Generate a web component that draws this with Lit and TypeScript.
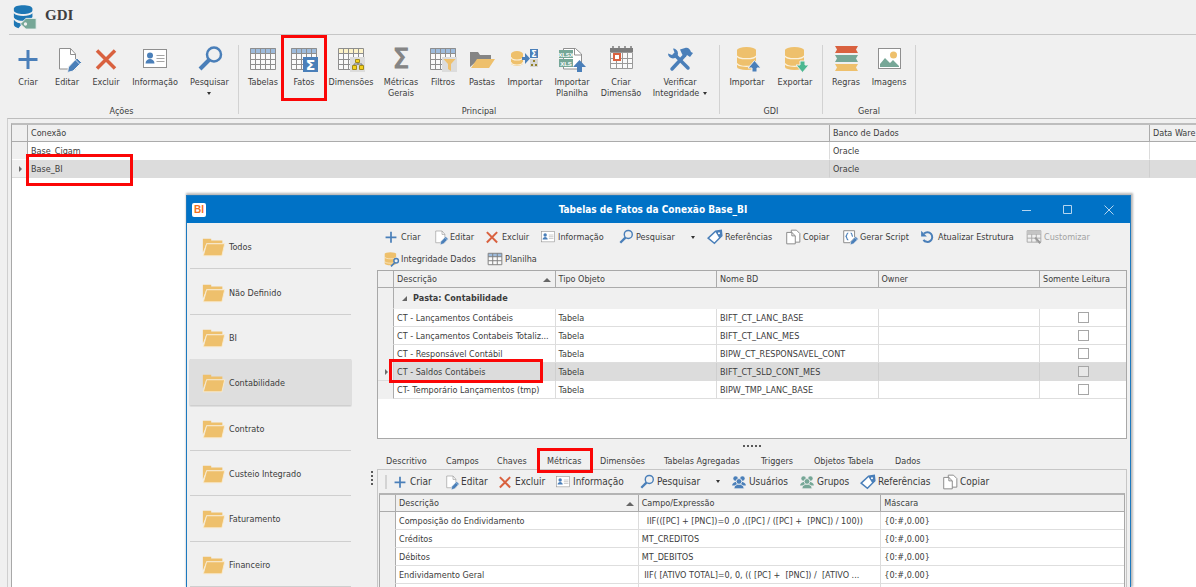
import { LitElement, html, svg, css, nothing } from "lit";
import { customElement, property } from "lit/decorators.js";
import { classMap } from "lit/directives/class-map.js";

const BLUE = "#4a7fb9";
const RED = "#d9613f";
const GREEN = "#76a797";
const GOLD = "#eec06c";

const plus = svg`<path d="M14 5v19M4.500 14.500h19" stroke=${BLUE} stroke-width="3" fill="none"/>`;
const pageShape = svg`<path d="M6.500 3.500h11l5 5.500v15h-16z" fill="#fff" stroke="#8f8f8f"/><path d="M17.500 3.500v6h5" fill="none" stroke="#8f8f8f"/>`;
const pencil = svg`<path d="M24 13l4.500 4.500-8.500 8.500-5.500 1.500 1-5.500z" fill=${BLUE} stroke="#f0f0f0"/><path d="M22 14.500l5 5" stroke="#c9dbee"/>`;
const tableShape = (head: string) => svg`
  <rect x="1.500" y="3.500" width="25" height="21" fill="#fafafa"/>
  <rect x="1" y="3" width="26" height="6" fill=${head}/>
  <path d="M1.500 3.500h25v21h-25zM1.500 8.500h25M1.500 14.500h25M1.500 19.500h25M6.500 3.500v21M11.500 3.500v21M16.500 3.500v21M21.500 3.500v21" fill="none" stroke="#8e8e8e"/>`;
const cylinder = (x: number, y: number, w: number, h: number) => svg`
  <path d="M${x} ${y + 3}a${w / 2} 3 0 0 1 ${w} 0v${h - 6}a${w / 2} 3 0 0 1 ${-w} 0z" fill=${GOLD}/>
  <path d="M${x} ${y + h / 3 + 1}a${w / 2} 3 0 0 0 ${w} 0M${x} ${y + (2 * h) / 3 + 1}a${w / 2} 3 0 0 0 ${w} 0" fill="none" stroke="#fbf1dc" stroke-width="1.200"/>`;
const people = (c: string) => svg`
  <g fill=${c}><circle cx="8" cy="8" r="4"/><circle cx="20" cy="8" r="4"/>
  <path d="M2 20c0-9 24-9 24 0z"/></g>
  <g fill=${c} stroke="#f0f0f0" stroke-width="1.500"><path d="M5 26c0-11 18-11 18 0z"/><circle cx="14" cy="13" r="5"/></g>`;

const ICONS: Record<string, unknown> = {
  plus,
  edit: svg`${pageShape}${pencil}`,
  remove: svg`<path d="M5 5.500l18 18M23 5.500l-18 18" stroke=${RED} stroke-width="3.500" fill="none"/>`,
  info: svg`<rect x="2.500" y="4.500" width="23" height="18" fill="#fff" stroke="#8f8f8f"/>
    <circle cx="9" cy="10.500" r="3" fill=${BLUE}/><path d="M4.500 18.500c0-6 9-6 9 0z" fill=${BLUE}/>
    <path d="M15.500 10.500h8M15.500 13.500h8M15.500 16.500h8" stroke="#a5a5a5"/>`,
  search: svg`<path d="M13 15l-9 9" stroke=${BLUE} stroke-width="4"/><circle cx="18" cy="9.500" r="7" fill="none" stroke=${BLUE} stroke-width="2.500"/>`,
  table: tableShape("#9dbbdc"),
  facts: svg`${tableShape("#9dbbdc")}<rect x="13" y="12" width="15" height="15" fill=${BLUE}/>
    <text x="20.500" y="24.500" font-size="14" font-weight="700" text-anchor="middle" fill="#fff">Σ</text>`,
  dims: svg`${tableShape("#fdf3c8")}<rect x="13" y="12" width="15" height="15" fill="#dcdcdc"/>
    <path d="M17 21v-2h8v2M21 18v2" stroke="#777" fill="none"/>
    <g fill="#f4d01c" stroke="#a08a1a"><path d="M18.500 14.500h4v3h-4zM15.500 20.500h4v4h-4zM22.500 20.500h4v4h-4z"/></g>`,
  sigma: svg`<text x="14" y="22.500" font-size="26" font-weight="400" text-anchor="middle" fill="#858585" stroke="#858585" stroke-width="1.200">Σ</text>`,
  filter: svg`${tableShape("#9dbbdc")}<rect x="13" y="12" width="15" height="15" fill="#dcdcdc"/>
    <path d="M14.500 14h12l-4.500 5v7l-3-2v-5z" fill=${GOLD}/>`,
  folders: svg`<path d="M2 22v-15h8l2 3h11v5h-13z" fill="#858585"/><path d="M9 14h18l-6 9h-18z" fill=${GOLD}/>`,
  importer: svg`${cylinder(0, 6, 12, 15)}
    <path d="M11 12h3v-4l5 5.500-5 5.500v-4h-3z" fill=${BLUE}/>
    <rect x="19" y="4" width="8" height="9" fill=${BLUE}/><text x="23" y="11.500" font-size="8" font-weight="700" text-anchor="middle" fill="#fff">Σ</text>
    <rect x="19" y="14" width="8" height="8" fill="#d6d6d6"/><path d="M22 15h2v2h-2zM20 19h2v2h-2zM24 19h2v2h-2z" fill="#93822b"/>`,
  sheet: svg`<path d="M5.500 3.500h12l6 5.500v15h-18z" fill="#fff" stroke="#8f8f8f"/><path d="M16.500 3.500v6.500h7" fill="none" stroke="#8f8f8f"/>
    <rect x="1" y="5" width="14" height="8" fill=${GREEN}/><rect x="1" y="14" width="14" height="8" fill=${GREEN}/>
    <text x="8" y="11.500" font-size="6" font-weight="700" font-family="Liberation Sans" text-anchor="middle" fill="#fff">XLSX</text>
    <text x="8" y="20.500" font-size="6" font-weight="700" font-family="Liberation Sans" text-anchor="middle" fill="#fff">XLS</text>
    <path d="M15 22l6.500-7 6.500 7h-4v5h-5v-5z" fill=${BLUE}/>`,
  calendar: svg`<rect x="3" y="3" width="23" height="21" fill="#fafafa"/><rect x="3" y="3" width="23" height="4" fill="#7c7c7c"/>
    <path d="M6 1v4M12 1v4M18 1v4M24 1v4" stroke="#7c7c7c" stroke-width="1.500"/>
    <path d="M3.500 7.500h22v16h-22zM3.500 13.500h22M3.500 18.500h22M9.500 7.500v16M15.500 7.500v16M20.500 7.500v16" fill="none" stroke="#9a9a9a"/>
    <rect x="7" y="9" width="6" height="6" fill="#fff" stroke=${RED} stroke-width="2"/>`,
  tools: svg`<path d="M6 24l13-14" stroke=${BLUE} stroke-width="3.500" stroke-linecap="round"/>
    <path d="M14 4.500l5-1.500c3-1 5 1 6 4l2 1-3 4-3-2-3 2-2-3z" fill=${BLUE}/>
    <path d="M9 10l13 13" stroke=${BLUE} stroke-width="3.500" stroke-linecap="round"/>
    <path d="M7 3.500a5 5 0 1 1-5 5l4 1.500 2.500-2.500z" fill=${BLUE}/>`,
  dbUp: svg`${cylinder(4, 2, 19, 23)}<path d="M15 23l6.500-7.500 6.500 7.500h-4v4h-5v-4z" fill=${BLUE} stroke="#f0f0f0"/>`,
  dbDown: svg`${cylinder(4, 2, 19, 23)}<path d="M15 20l6.500 7.500 6.500-7.500h-4v-4h-5v4z" fill="#4bb891" stroke="#f0f0f0"/>`,
  rules: svg`<path d="M3 1h23l-2 3.500 2 3.500h-23l2-3.500z" fill=${RED}/><path d="M3 10h23l-2 3.500 2 3.500h-23l2-3.500z" fill=${GREEN}/><path d="M3 19h23l-2 3.500 2 3.500h-23l2-3.500z" fill=${GOLD}/>`,
  image: svg`<rect x="3.500" y="3.500" width="22" height="20" fill="#fff" stroke="#8f8f8f"/><circle cx="18.500" cy="10" r="3.500" fill=${GOLD}/>
    <path d="M5 22v-3l5-6 5 5 3-3 6 6v1z" fill=${GREEN}/>`,
  folder: svg`<path d="M2 5h9v2h12v3h-17l-4 10z" fill=${GOLD}/><path d="M6 10.500h19.500l-3 13h-20z" fill=${GOLD} stroke="#f9ecd0"/>`,
  tag: svg`<path d="M2 16l13-12 10-1.500 1 9.500-13 13z" fill="#fff" stroke=${BLUE} stroke-width="2.500"/><path d="M14 4l11-1.500 1 10-4 4z" fill=${BLUE}/><circle cx="21" cy="7.500" r="1.800" fill="#fff"/>`,
  copy: svg`<path d="M11 2h9l6 6v15h-15z" fill="#fff" stroke="#8a8a8a" stroke-width="1.700"/><path d="M3 6h9l6 6v14h-15z" fill="#fff" stroke="#8a8a8a" stroke-width="1.700"/><path d="M12 6v6h6" fill="none" stroke="#8a8a8a" stroke-width="1.700"/>`,
  script: svg`<path d="M3 3h19v12l-8 9h-11z" fill="#fff" stroke="#8a8a8a" stroke-width="1.700"/><path d="M11 7c-4 0-1 6-5 6 4 0 1 6 5 6M15 7c4 0 1 5 4 6" fill="none" stroke=${BLUE} stroke-width="2"/>${pencil}`,
  undo: svg`<path d="M7 8a8.500 8.500 0 1 1-1 11" fill="none" stroke=${BLUE} stroke-width="3.500"/><path d="M2 3v10h10z" fill=${BLUE}/>`,
  custom: svg`<path d="M2 3h24v20h-24zM2 9h24M2 16h24M10 3v20M18 3v20" fill="none" stroke="#aaa" stroke-width="1.700"/><path d="M2 3h24v6h-24z" fill="#c4c4c4"/><path d="M16 15l9 10" stroke="#999" stroke-width="3.500"/>`,
  dbSearch: svg`${cylinder(3, 2, 20, 23)}<path d="M20 21l-6 6" stroke=${BLUE} stroke-width="3"/><circle cx="23" cy="17" r="4" fill="#f0f0f0" stroke=${BLUE} stroke-width="2.500"/>`,
  sheetGrid: svg`<rect x="2" y="4" width="24" height="20" fill="#fafafa"/><rect x="2" y="4" width="24" height="6" fill="#9dbbdc"/><path d="M2 4h24v20h-24zM2 10h24M2 17h24M10 4v20M18 4v20" fill="none" stroke="#808080" stroke-width="1.700"/>`,
  users: people(BLUE),
  groups: people(GREEN),
  logo: svg`<g fill="#1e77b4"><path d="M2 5c0-5 20-5 20 0v2c0 5-20 5-20 0z"/><path d="M2 10c3 4 17 4 20 0v4c-1 2-6 4-11 4s-9-2-9-4z"/><path d="M2 17c2 3 6 4 9 4l-4 5c-3-1-5-2-5-4z"/></g>
    <path d="M9 21.500l6-6h11v11.500h-11z" fill=${GREEN} stroke="#e8f0ee"/><circle cx="14.500" cy="21.500" r="1.800" fill="#f0f0f0"/>`,
};

type Command = {
  icon: string;
  label: string;
  second?: string;
  arrow?: boolean;
  marked?: boolean;
  disabled?: boolean;
};

@customElement("gdi-icon")
export class GdiIcon extends LitElement {
  @property() name = "plus";

  static styles = css`
    :host { display: block; width: 28px; height: 28px; flex: none; }
    svg { display: block; width: 100%; height: 100%; overflow: visible; font-family: "DejaVu Sans", sans-serif; }
  `;

  render() {
    return html`<svg viewBox="0 0 28 28" aria-hidden="true">${ICONS[this.name] ?? nothing}</svg>`;
  }
}

@customElement("gdi-ribbon-group")
export class GdiRibbonGroup extends LitElement {
  @property() caption = "";
  @property({ attribute: false }) items: Command[] = [];

  static styles = css`
    :host { display: flex; flex-direction: column; justify-content: space-between; padding: 0 4px; border-right: 1px solid #d2d2d2; }
    :host(.gdi), :host(.general) { padding: 0 3px; }
    .items { display: grid; }
    :host(.actions) .items { grid-template-columns: 38px 40px 38px 60px 49px; }
    :host(.main) .items { grid-template-columns: 40px 42px 52px 48px 36px 42px 44px 50px 48px 70px; }
    :host(.gdi) .items { grid-template-columns: 48px 48px; }
    :host(.general) .items { grid-template-columns: 40px 46px; }
    button { position: relative; display: flex; flex-direction: column; align-items: center; gap: 4px; border: 0; padding: 0; background: none; font: inherit; color: inherit; line-height: 11px; white-space: nowrap; }
    .line { display: block; }
    .line.tail { display: flex; justify-content: center; align-items: center; gap: 4px; min-height: 11px; }
    .arrow { border: 2px solid transparent; border-top: 3px solid #333; border-bottom: 0; }
    .mark { position: absolute; inset: -10px -2px -2px; border: 3px solid #fb0606; }
    .caption { margin-bottom: -3px; text-align: center; line-height: 12px; }
  `;

  render() {
    return html`
      <div class="items">
        ${this.items.map(
          (c) => html`<button type="button">
            <gdi-icon name=${c.icon}></gdi-icon>
            <span>
              <span class="line">${c.label}</span>
              <span class="line tail">${c.second ?? nothing}${c.arrow ? html`<span class="arrow"></span>` : nothing}</span>
            </span>
            ${c.marked ? html`<span class="mark"></span>` : nothing}
          </button>`
        )}
      </div>
      <div class="caption">${this.caption}</div>
    `;
  }
}

@customElement("gdi-toolbar")
export class GdiToolbar extends LitElement {
  @property({ attribute: false }) items: Command[] = [];

  static styles = css`
    :host { display: grid; align-items: center; height: 22px; }
    button { display: flex; align-items: center; gap: 2px; border: 0; padding: 0; background: none; font: inherit; color: inherit; white-space: nowrap; }
    button:disabled { color: #a3a3a3; }
    gdi-icon { width: 16px; height: 16px; }
    .arrow { margin-left: 14px; border: 2px solid transparent; border-top: 3px solid #333; border-bottom: 0; }
  `;

  render() {
    return this.items.map(
      (c) => html`<button type="button" ?disabled=${c.disabled}>
        <gdi-icon name=${c.icon}></gdi-icon><span>${c.label}</span>
        ${c.arrow ? html`<span class="arrow"></span>` : nothing}
      </button>`
    );
  }
}

const ACTIONS: Command[] = [
  { icon: "plus", label: "Criar" },
  { icon: "edit", label: "Editar" },
  { icon: "remove", label: "Excluir" },
  { icon: "info", label: "Informação" },
  { icon: "search", label: "Pesquisar", arrow: true },
];
const MAIN: Command[] = [
  { icon: "table", label: "Tabelas" },
  { icon: "facts", label: "Fatos", marked: true },
  { icon: "dims", label: "Dimensões" },
  { icon: "sigma", label: "Métricas", second: "Gerais" },
  { icon: "filter", label: "Filtros" },
  { icon: "folders", label: "Pastas" },
  { icon: "importer", label: "Importar" },
  { icon: "sheet", label: "Importar", second: "Planilha" },
  { icon: "calendar", label: "Criar", second: "Dimensão" },
  { icon: "tools", label: "Verificar", second: "Integridade", arrow: true },
];
const GDI: Command[] = [
  { icon: "dbUp", label: "Importar" },
  { icon: "dbDown", label: "Exportar" },
];
const GENERAL: Command[] = [
  { icon: "rules", label: "Regras" },
  { icon: "image", label: "Imagens" },
];
const FACT_TOOLS: Command[] = [
  ...ACTIONS,
  { icon: "tag", label: "Referências" },
  { icon: "copy", label: "Copiar" },
  { icon: "script", label: "Gerar Script" },
  { icon: "undo", label: "Atualizar Estrutura" },
  { icon: "custom", label: "Customizar", disabled: true },
];
const FACT_TOOLS_MORE: Command[] = [
  { icon: "dbSearch", label: "Integridade Dados" },
  { icon: "sheetGrid", label: "Planilha" },
];
const METRIC_TOOLS: Command[] = [
  ...ACTIONS,
  { icon: "users", label: "Usuários" },
  { icon: "groups", label: "Grupos" },
  { icon: "tag", label: "Referências" },
  { icon: "copy", label: "Copiar" },
];
const FOLDERS = ["Todos", "Não Definido", "BI", "Contabilidade", "Contrato", "Custeio Integrado", "Faturamento", "Financeiro"];
const TABS = ["Descritivo", "Campos", "Chaves", "Métricas", "Dimensões", "Tabelas Agregadas", "Triggers", "Objetos Tabela", "Dados"];
const FACTS = [
  ["CT - Lançamentos Contábeis", "BIFT_CT_LANC_BASE"],
  ["CT - Lançamentos Contabeis Totaliz...", "BIFT_CT_LANC_MES"],
  ["CT - Responsável Contábil", "BIPW_CT_RESPONSAVEL_CONT"],
  ["CT - Saldos Contábeis", "BIFT_CT_SLD_CONT_MES"],
  ["CT- Temporário Lançamentos (tmp)", "BIPW_TMP_LANC_BASE"],
];
const METRICS = [
  ["Composição do Endividamento", "  IIF(([PC] + [PNC])=0 ,0 ,([PC] / ([PC] +  [PNC]) / 100))"],
  ["Créditos", "MT_CREDITOS"],
  ["Débitos", "MT_DEBITOS"],
  ["Endividamento Geral", " IIF( [ATIVO TOTAL]=0, 0, (( [PC] +  [PNC]) /  [ATIVO ..."],
];

@customElement("app-root")
export class AppRoot extends LitElement {
  static styles = css`
    :host { position: relative; display: flex; flex-direction: column; height: 100vh; overflow: hidden; background: #f0f0f0; color: #3c3c3c; font: 9px/12px "DejaVu Sans Condensed", "Noto Sans", sans-serif; }
    * { box-sizing: border-box; }

    header { display: flex; align-items: flex-start; gap: 7px; margin-left: 9px; padding: 4px 3px 0; height: 35px; border-bottom: 1px solid #c6c6c6; }
    header gdi-icon { width: 26px; height: 26px; }
    h1 { margin: 2px 0 0; color: #3f3f3f; font: bold 15px/18px "Liberation Serif", serif; }
    .ribbon { display: flex; height: 83px; padding: 10px 0 4px 5px; }

    .main-grid { flex: 1; margin-left: 7px; padding: 4px 0 0 3px; border-top: 1px solid #bdbdbd; border-left: 1px solid #cfcfcf; overflow: hidden; }
    .frame { height: 100%; background: #fff; border-top: 2px solid #bdbdbd; border-left: 1px solid #a8a8a8; overflow: hidden; }

    table { width: 100%; table-layout: fixed; border-spacing: 0; }
    th, td { height: 18px; padding: 0 3px; border-right: 1px solid #dcdcdc; border-bottom: 1px solid #dedede; text-align: left; font-weight: normal; white-space: pre; overflow: hidden; text-overflow: ellipsis; }
    td { background: #fff; }
    th { height: 17px; background: #f0f0f0; border-color: #ababab; }
    th:last-child, td:last-child { border-right: 0; }
    td.gutter { padding: 0; background: #f0f0f0; border-right-color: #ababab; border-bottom-color: #f0f0f0; }
    tr.current td { background: #dcdcdc; border-bottom-color: #dcdcdc; border-right-color: #cfcfcf; }
    tr.current td.gutter { background: #f0f0f0; }
    .pointer { display: block; width: 0; margin-left: 7px; border: 3px solid transparent; border-left: 3px solid #6b6b6b; border-right: 0; }
    col.gutter { width: 16px; }
    col.bank { width: 320px; }
    col.warehouse { width: 46px; }
    .cut th:last-child { padding-right: 0; text-overflow: clip; }
    .plain td { border-bottom-color: #fff; }
    .plain tr.current td { border-bottom-color: #dcdcdc; }
    tr.current td.markable, .markable { position: relative; overflow: visible; }
    .mark { position: absolute; border: 3px solid #fb0606; z-index: 1; }
    .mark.base { top: -6px; left: -2px; width: 107px; height: 32px; }
    .mark.fact { inset: -4px 12px -3px -5px; }
    .mark.tab { inset: -7px -12px -6px -10px; }

    .dialog { position: absolute; top: 195px; right: 65px; bottom: 0; left: 186px; display: flex; flex-direction: column; border: 1px solid #1c79bf; border-bottom: 0; background: #f0f0f0; box-shadow: 1px -1px 2px 1px rgba(0, 0, 0, 0.28); }
    .title { display: grid; grid-template-columns: 1fr auto 1fr; align-items: center; height: 27px; padding: 0 16px 0 5px; background: #0072c6; color: #fff; }
    .title h2 { margin: 0; font-size: 10px; line-height: 14px; font-weight: bold; }
    .badge { width: 14px; height: 14px; border-radius: 2px; background: #fff; color: #f26f21; font: bold 10px/14px "Liberation Sans", sans-serif; text-align: center; }
    .window-buttons { display: flex; justify-content: flex-end; gap: 31px; }
    .window-buttons button { width: 10px; height: 10px; padding: 0; border: 0; background: none; }
    .window-buttons svg { display: block; width: 10px; height: 10px; fill: none; stroke: #b5d5ef; }

    .body { flex: 1; display: flex; min-height: 0; }
    nav { display: flex; flex-direction: column; width: 167px; padding: 1px 2px 0; }
    nav button { flex: 1; display: flex; align-items: center; gap: 2px; border: 0; border-bottom: 1px solid #cfcfcf; margin: 0 1px; padding: 2px 0 0 11px; background: none; color: inherit; font: inherit; text-align: left; }
    nav button gdi-icon { width: 26px; height: 26px; }
    nav button.selected { background: #dedede; box-shadow: 0 0 0 1px #dedede; border-radius: 1px; }
    .grip { display: flex; gap: 2px; align-items: center; justify-content: center; }
    .grip i { width: 2px; height: 2px; background: #5a5a5a; }
    .grip.vertical { flex-direction: column; width: 23px; padding: 146px 0 0 12px; }
    .grip.horizontal { height: 13px; }

    .content { flex: 1; min-width: 0; display: flex; flex-direction: column; margin-right: 3px; }
    .tools { padding: 3px 0 1px 6px; }
    .facts { grid-template-columns: 49px 52px 56px 78px 89px 78px 57px 78px 106px auto; }
    .facts-more { grid-template-columns: 104px auto; justify-content: start; height: 21px; }
    .fact-frame { height: 169px; border: 1px solid #a8a8a8; background: #fff; overflow: hidden; }
    .fact-frame col.check { width: 86px; }
    .fact-frame td.group { height: 21px; padding-left: 8px; border-bottom-color: #f0f0f0; background: #f0f0f0; font-weight: bold; }
    .expander { display: inline-block; margin-right: 6px; border-bottom: 5px solid #666; border-left: 5px solid transparent; }
    .sort { float: right; margin: 5px 1px 0 0; border: 4px solid transparent; border-bottom: 4px solid #666; border-top: 0; }
    td.center { text-align: center; }
    input { display: block; appearance: none; width: 11px; height: 11px; margin: 0 auto; border: 1px solid #a6a6a6; background: #fff; }
    .current input { background: #e8e8e8; }

    .tabs { display: grid; grid-template-columns: 60px 51px 50px 53px 64px 97px 53px 81px auto; align-items: center; justify-content: start; height: 17px; padding-left: 9px; }
    .tabs button { position: relative; justify-self: start; border: 0; padding: 0; background: none; color: inherit; font: inherit; white-space: nowrap; }
    .panel { flex: 1; min-height: 0; display: flex; flex-direction: column; border: 1px solid #c6c6c6; border-bottom: 0; }
    .metric-bar { display: flex; align-items: center; gap: 5px; height: 23px; padding-left: 7px; font-size: 10px; }
    .handle { width: 2px; height: 14px; background: #d3d3d3; }
    .metrics { grid-template-columns: 51px 54px 58px 84px 92px 68px 61px 82px auto; }
    .metric-frame { flex: 1; min-height: 0; margin: 0 1px; border: 1px solid #a8a8a8; border-bottom: 0; border-top: 2px solid #b4b4b4; background: #fff; overflow: hidden; }
  `;

  private pointer(on: boolean) {
    return on ? html`<span class="pointer"></span>` : nothing;
  }

  private connections() {
    return html`
      <table class="cut plain">
        <colgroup><col class="gutter" /><col /><col class="bank" /><col class="warehouse" /></colgroup>
        <thead>
          <tr><th></th><th>Conexão</th><th>Banco de Dados</th><th>Data Ware</th></tr>
        </thead>
        <tbody>
          <tr><td class="gutter"></td><td>Base_Cigam</td><td>Oracle</td><td></td></tr>
          <tr class="current">
            <td class="gutter">${this.pointer(true)}</td>
            <td class="markable">Base_BI<span class="mark base"></span></td>
            <td>Oracle</td>
            <td></td>
          </tr>
        </tbody>
      </table>
    `;
  }

  private facts() {
    return html`
      <table>
        <colgroup><col class="gutter" /><col /><col /><col /><col /><col class="check" /></colgroup>
        <thead>
          <tr>
            <th></th><th>Descrição<span class="sort"></span></th><th>Tipo Objeto</th><th>Nome BD</th><th>Owner</th><th>Somente Leitura</th>
          </tr>
        </thead>
        <tbody>
          <tr><td class="gutter"></td><td class="group" colspan="5"><span class="expander"></span>Pasta: Contabilidade</td></tr>
          ${FACTS.map(([name, db], i) => {
            const on = i === 3;
            return html`<tr class=${classMap({ current: on })}>
              <td class="gutter">${this.pointer(on)}</td>
              <td class=${classMap({ markable: on })}>${name}${on ? html`<span class="mark fact"></span>` : nothing}</td>
              <td>Tabela</td>
              <td>${db}</td>
              <td></td>
              <td class="center"><input type="checkbox" aria-label="Somente Leitura" /></td>
            </tr>`;
          })}
        </tbody>
      </table>
    `;
  }

  private metrics() {
    return html`
      <table>
        <colgroup><col class="gutter" /><col /><col /><col /></colgroup>
        <thead>
          <tr><th></th><th>Descrição<span class="sort"></span></th><th>Campo/Expressão</th><th>Máscara</th></tr>
        </thead>
        <tbody>
          ${METRICS.map(
            ([name, expression]) => html`<tr><td class="gutter"></td><td>${name}</td><td>${expression}</td><td>{0:#,0.00}</td></tr>`
          )}
          <tr><td class="gutter"></td><td></td><td></td><td></td></tr>
        </tbody>
      </table>
    `;
  }

  private dots(count: number) {
    return Array.from({ length: count }, () => html`<i></i>`);
  }

  render() {
    return html`
      <header><gdi-icon name="logo"></gdi-icon><h1>GDI</h1></header>
      <div class="ribbon">
        <gdi-ribbon-group class="actions" caption="Ações" .items=${ACTIONS}></gdi-ribbon-group>
        <gdi-ribbon-group class="main" caption="Principal" .items=${MAIN}></gdi-ribbon-group>
        <gdi-ribbon-group class="gdi" caption="GDI" .items=${GDI}></gdi-ribbon-group>
        <gdi-ribbon-group class="general" caption="Geral" .items=${GENERAL}></gdi-ribbon-group>
      </div>
      <main class="main-grid"><div class="frame">${this.connections()}</div></main>

      <section class="dialog" role="dialog" aria-label="Tabelas de Fatos">
        <div class="title">
          <span class="badge">BI</span>
          <h2>Tabelas de Fatos da Conexão Base_BI</h2>
          <div class="window-buttons">
            <button type="button" aria-label="Minimizar"><svg viewBox="0 0 10 10"><path d="M0 5.500h9" /></svg></button>
            <button type="button" aria-label="Maximizar"><svg viewBox="0 0 10 10"><path d="M.5.5h8v8h-8z" /></svg></button>
            <button type="button" aria-label="Fechar"><svg viewBox="0 0 10 10"><path d="M.5.5l9 9M9.500.5l-9 9" /></svg></button>
          </div>
        </div>
        <div class="body">
          <nav>
            ${FOLDERS.map(
              (name) => html`<button type="button" class=${classMap({ selected: name === "Contabilidade" })}>
                <gdi-icon name="folder"></gdi-icon><span>${name}</span>
              </button>`
            )}
          </nav>
          <div class="grip vertical">${this.dots(4)}</div>
          <div class="content">
            <div class="tools">
              <gdi-toolbar class="facts" .items=${FACT_TOOLS}></gdi-toolbar>
              <gdi-toolbar class="facts-more" .items=${FACT_TOOLS_MORE}></gdi-toolbar>
            </div>
            <div class="fact-frame">${this.facts()}</div>
            <div class="grip horizontal">${this.dots(5)}</div>
            <div class="tabs" role="tablist">
              ${TABS.map(
                (name) => html`<button type="button" role="tab" aria-selected=${name === "Métricas" ? "true" : "false"}>
                  ${name}${name === "Métricas" ? html`<span class="mark tab"></span>` : nothing}
                </button>`
              )}
            </div>
            <div class="panel">
              <div class="metric-bar">
                <span class="handle"></span>
                <gdi-toolbar class="metrics" .items=${METRIC_TOOLS}></gdi-toolbar>
              </div>
              <div class="metric-frame">${this.metrics()}</div>
            </div>
          </div>
        </div>
      </section>
    `;
  }
}
